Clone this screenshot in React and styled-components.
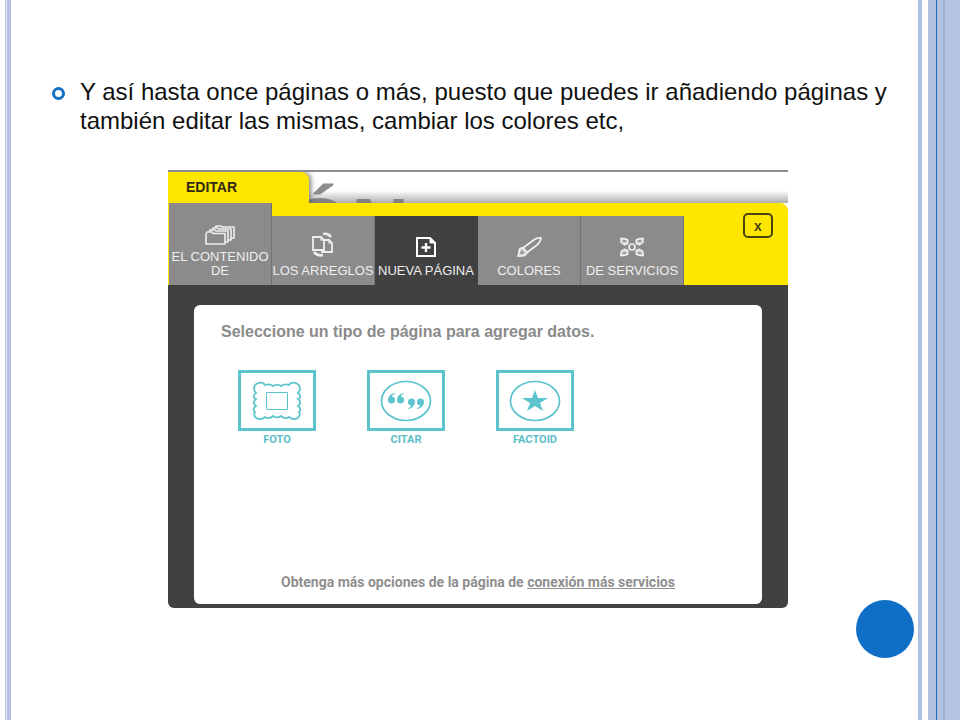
import React from "react";
import styled, { createGlobalStyle } from "styled-components";

const GlobalStyle = createGlobalStyle`
  * {
    box-sizing: border-box;
  }
  body {
    margin: 0;
    background: #ffffff;
    font-family: "Liberation Sans", Arial, sans-serif;
  }
  button {
    font-family: inherit;
    border: none;
    padding: 0;
    cursor: pointer;
  }
`

const Slide = styled.div`
  display: flex;
  min-height: 100vh;
  overflow: hidden;
`

const Stripes = styled.div`
  display: flex;
  flex: none;
`

const Stripe = styled.div`
  width: ${(props) => props.$width}px;
  background: ${(props) => props.$color};
`

const Main = styled.main`
  position: relative;
  flex: 1;
  min-width: 0;
  padding: 77px 24px 0 40px;
`

const Bullets = styled.ul`
  list-style: none;
  margin: 0;
  padding: 0;
`

const Bullet = styled.li`
  display: flex;
  gap: 15px;
  font-size: 24px;
  line-height: 29px;
  color: #111111;
`

const Ring = styled.span`
  flex: none;
  width: 13px;
  height: 13px;
  margin: 10px 0 0 1px;
  border: 3px solid #1470c4;
  border-radius: 50%;
`

const Dot = styled.div`
  position: absolute;
  right: 4px;
  bottom: 62px;
  width: 58px;
  height: 58px;
  border-radius: 50%;
  background: #0f6fc6;
`

const Editor = styled.section`
  position: relative;
  max-width: 620px;
  margin: 35px auto 0 117px;
  border-top: 2px solid #8e8e8e;
  overflow: hidden;
`

// page title that peeks out behind the editor
const Backdrop = styled.div`
  position: absolute;
  top: 0;
  left: 121px;
  height: 31px;
  padding-top: 9px;
  overflow: hidden;
  font-size: 80px;
  line-height: 92px;
  font-weight: bold;
  color: #8c8c8c;
`

const TabLine = styled.div`
  position: relative;
  display: flex;
`

const EditTab = styled.h1`
  width: 141px;
  height: 31px;
  margin: 0;
  padding-left: 18px;
  border-top-right-radius: 8px;
  background: #ffe600;
  box-shadow: 2px 0 5px rgba(0, 0, 0, 0.5);
  font-size: 14px;
  line-height: 31px;
  color: #2e2a10;
`

const TabShade = styled.div`
  flex: 1;
  background: linear-gradient(to bottom, rgba(120, 120, 120, 0) 60%, rgba(120, 120, 120, 0.6));
`

const Header = styled.header`
  position: relative;
  display: flex;
  align-items: flex-end;
  height: 82px;
  padding-left: 1px;
  border-top-right-radius: 8px;
  background: #ffe600;
`

const Tab = styled.button`
  display: flex;
  flex-direction: column;
  align-items: center;
  justify-content: flex-end;
  gap: ${(props) => (props.$tall ? 5 : 7)}px;
  width: 103px;
  height: ${(props) => (props.$tall ? 82 : 69)}px;
  padding-bottom: 7px;
  border-right: 1px solid ${(props) => (props.$active ? "#414141" : "#747474")};
  background: ${(props) => (props.$active ? "#414141" : "#8b8b8b")};
  font-size: 13px;
  line-height: 14px;
  color: #eeeeee;
`

const TabText = styled.span`
  white-space: ${(props) => (props.$wrap ? "normal" : "nowrap")};
`

const Close = styled.button`
  align-self: flex-start;
  width: 30px;
  height: 25px;
  margin: 10px 15px 0 auto;
  border: 2px solid #4a430c;
  border-radius: 5px;
  background: transparent;
  font-size: 14px;
  line-height: 20px;
  font-weight: bold;
  color: #4a430c;
`

const Body = styled.div`
  position: relative;
  padding: 20px 26px 4px;
  border-radius: 0 0 6px 6px;
  background: #414141;
`

const Card = styled.div`
  display: flex;
  flex-direction: column;
  height: 299px;
  padding: 18px 27px 14px;
  border-radius: 6px;
  background: #ffffff;
`

const CardTitle = styled.h2`
  margin: 0;
  font-size: 16px;
  line-height: 18px;
  color: #8a8a8a;
`

const Choices = styled.div`
  display: flex;
  gap: 51px;
  margin: 29px 0 0 17px;
`

const Choice = styled.button`
  display: flex;
  flex-direction: column;
  align-items: center;
  gap: 3px;
  width: 78px;
  background: transparent;
  font-family: Roboto, sans-serif;
  font-size: 11px;
  line-height: 12px;
  font-weight: bold;
  color: #5cc0c9;
`

const Frame = styled.span`
  display: flex;
  align-items: center;
  justify-content: center;
  width: 100%;
  height: 61px;
  border: 3px solid #5cc4cc;
`

const More = styled.p`
  margin: auto 0 0;
  text-align: center;
  font-family: Roboto, sans-serif;
  font-size: 14px;
  line-height: 16px;
  font-weight: bold;
  color: #8f8f8f;
`

const MoreLink = styled.a`
  color: inherit;
`

const FoldersIcon = () => (
  <svg width="30" height="20" viewBox="0 0 30 20" fill="#8b8b8b" stroke="#eeeeee" strokeWidth="1.6" strokeLinejoin="round">
    <path d="M10 12V3l1-2h5l1 1h12v11H10z" />
    <path d="M7 14V5l1-2h5l1 1h12v11H7z" />
    <path d="M4 16V7l1-2h5l1 1h12v11H4z" />
    <path d="M1 19V9l1-2h5l1 1.500h12v10.500z" />
  </svg>
)

const ArrangeIcon = () => (
  <svg width="24" height="25" viewBox="0 0 24 25" fill="none" stroke="#eeeeee" strokeWidth="1.8">
    <path d="M11 8h7l3 3v9H11z" />
    <path d="M2 5h8l3 3v10H2z" fill="#8b8b8b" />
    <path d="M10 5v3h3M18 8v3h3" strokeWidth="1.2" />
    <path d="M12 2c4-1 6 0 8 3M12 23c-4 1-7 0-9-3" strokeWidth="2.6" />
  </svg>
)

const NewPageIcon = () => (
  <svg width="20" height="20" viewBox="0 0 20 20" fill="none" stroke="#ffffff" strokeWidth="2">
    <path d="M1 1h13l5 5v13H1z" />
    <path d="M14 1v5h5z" fill="#ffffff" strokeWidth="1" />
    <path d="M10 6v9M5.500 10.500h9" strokeWidth="2.400" />
  </svg>
)

const BrushIcon = () => (
  <svg width="26" height="20" viewBox="0 0 26 20" fill="none" stroke="#eeeeee" strokeWidth="1.8" strokeLinejoin="round">
    <path d="M7 11L17 3.500c3-2 6-3 8-2.500 0 3-2 5-4 7l-10 7.500z" />
    <path d="M7 11c-3 0-4 1-4 4 0 2 0 3-1 4 4 0 8 0 9-3.500z" fill="#eeeeee" fillOpacity="0.5" />
    <circle cx="6" cy="15.500" r="1" fill="#777777" stroke="none" />
  </svg>
)

const ServicesIcon = () => (
  <svg width="26" height="20" viewBox="0 0 26 20" fill="none" stroke="#eeeeee" strokeWidth="2" strokeLinejoin="round">
    <circle cx="13" cy="10" r="3" strokeWidth="1.700" />
    <path d="M2 1.500l4 .5 2.500 1v3l-3 1.500-3-2zM24 1.500l-4 .5-2.500 1v3l3 1.500 3-2zM2 18.500l4-.5 2.500-1v-3l-3-1.500-3 2zM24 18.500l-4-.5-2.500-1v-3l3-1.500 3 2z" />
    <path d="M4 4l5 3.500M22 4l-5 3.500M4 16l5-3.500M22 16l-5-3.500" strokeWidth="1" />
  </svg>
)

const PhotoIcon = () => (
  <svg width="50" height="40" viewBox="0 0 50 40" fill="none" stroke="#5cc4cc" strokeWidth="1.8">
    <path d="M13 4C11 0 2 1 2 8c0 2 1 3 2 4-3 2-3 5 0 6-3 2-3 5 0 7-3 2-3 5-1 6-3 5 4 10 10 5 3 2 6 1 8-1 3 2 5 2 8 0 2 2 5 3 8 1 6 5 13 0 10-5 2-1 2-4-1-6 3-2 3-5 0-7 3-1 3-4 0-6 1-1 2-2 2-4 0-7-9-8-11-4-3-1-5-1-8 1-3-2-5-2-8 0-3-2-5-2-8-1z" />
    <path d="M14.500 11.500h21v17h-21z" strokeWidth="1" />
  </svg>
)

const QuoteIcon = () => (
  <svg width="52" height="42" viewBox="0 0 52 42" fill="#5cc4cc">
    <ellipse cx="26" cy="21" rx="24.500" ry="19.500" fill="none" stroke="#5cc4cc" strokeWidth="1.700" />
    <path d="M15 13c-5 1-7 4-7 7a3.500 3.500 0 1 0 4-3.500c0-1 1-2 3-2.500zM24 13c-5 1-7 4-7 7a3.500 3.500 0 1 0 4-3.500c0-1 1-2 3-2.500z" />
    <path d="M28 29c5-1 7-4 7-7a3.500 3.500 0 1 0-4 3.500c0 1-1 2-3 2.500zM37 29c5-1 7-4 7-7a3.500 3.500 0 1 0-4 3.500c0 1-1 2-3 2.500z" />
  </svg>
)

const StarIcon = () => (
  <svg width="52" height="42" viewBox="0 0 52 42" fill="#5cc4cc">
    <ellipse cx="26" cy="21" rx="24.500" ry="19.500" fill="none" stroke="#5cc4cc" strokeWidth="1.700" />
    <path d="M26 10l3 8h10l-8 5 3 8-8-5-8 5 3-8-8-5h10z" />
  </svg>
)

const tabs = [
  { text: "EL CONTENIDO DE", icon: <FoldersIcon />, tall: true },
  { text: "LOS ARREGLOS", icon: <ArrangeIcon /> },
  { text: "NUEVA PÁGINA", icon: <NewPageIcon />, active: true },
  { text: "COLORES", icon: <BrushIcon /> },
  { text: "DE SERVICIOS", icon: <ServicesIcon /> },
]

const choices = [
  { text: "FOTO", icon: <PhotoIcon /> },
  { text: "CITAR", icon: <QuoteIcon /> },
  { text: "FACTOID", icon: <StarIcon /> },
]

export default function App() {
  return (
    <>
      <GlobalStyle />
      <Slide>
        <Stripes>
          <Stripe $width={5} $color="#ffffff" />
          <Stripe $width={1} $color="#b4c8e6" />
          <Stripe $width={1} $color="#e6ecf6" />
          <Stripe $width={4} $color="#b4c1e0" />
        </Stripes>
        <Main>
          <Bullets>
            <Bullet>
              <Ring />
              <span>
                Y así hasta once páginas o más, puesto que puedes ir añadiendo páginas y
                también editar las mismas, cambiar los colores etc,
              </span>
            </Bullet>
          </Bullets>
          <Editor>
            <Backdrop>ÓN</Backdrop>
            <TabLine>
              <EditTab>EDITAR</EditTab>
              <TabShade />
            </TabLine>
            <Header>
              {tabs.map((tab) => (
                <Tab key={tab.text} $tall={tab.tall} $active={tab.active}>
                  {tab.icon}
                  <TabText $wrap={tab.tall}>{tab.text}</TabText>
                </Tab>
              ))}
              <Close>x</Close>
            </Header>
            <Body>
              <Card>
                <CardTitle>Seleccione un tipo de página para agregar datos.</CardTitle>
                <Choices>
                  {choices.map((choice) => (
                    <Choice key={choice.text}>
                      <Frame>{choice.icon}</Frame>
                      {choice.text}
                    </Choice>
                  ))}
                </Choices>
                <More>
                  Obtenga más opciones de la página de{" "}
                  <MoreLink href="#servicios">conexión más servicios</MoreLink>
                </More>
              </Card>
            </Body>
          </Editor>
          <Dot />
        </Main>
        <Stripes>
          <Stripe $width={4} $color="#a9c0e2" />
          <Stripe $width={6} $color="#ffffff" />
          <Stripe $width={8} $color="#b4c2e1" />
          <Stripe $width={1} $color="#1a6bb4" />
          <Stripe $width={6} $color="#b4c2e1" />
          <Stripe $width={2} $color="#9db1d9" />
          <Stripe $width={15} $color="#b4c3e2" />
        </Stripes>
      </Slide>
    </>
  );
}
